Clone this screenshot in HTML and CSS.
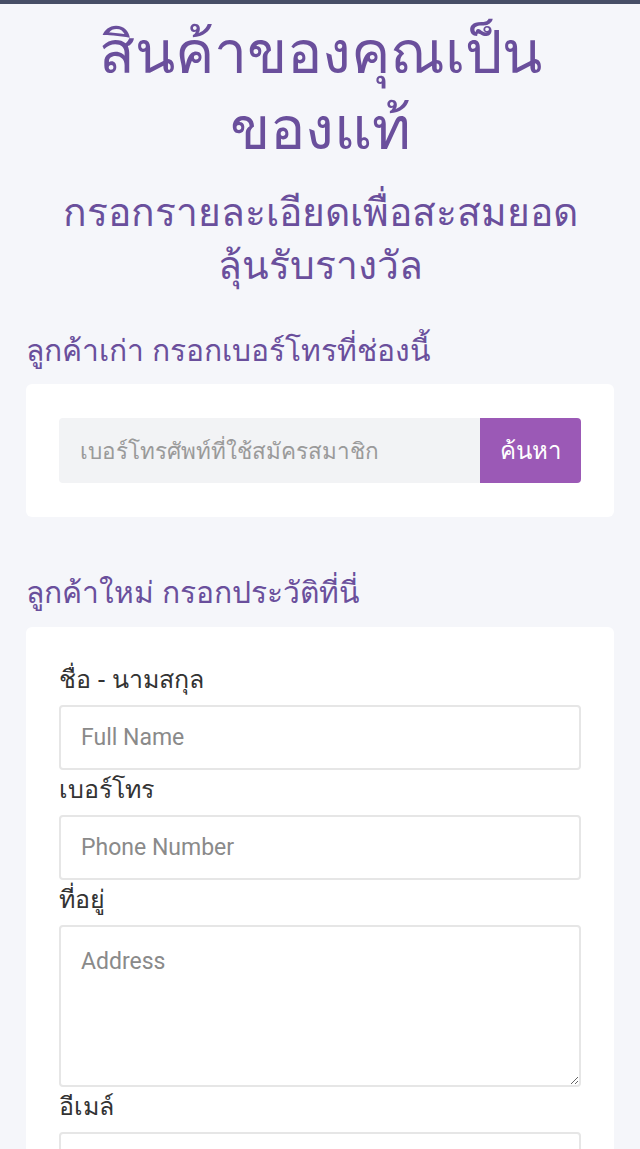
FILE: index.html
```html
<!DOCTYPE html>
<html lang="th">
<head>
    <meta charset="UTF-8">
    <meta name="viewport" content="width=device-width, initial-scale=1.0">
    <title>ลงทะเบียนสินค้า</title>
    <link rel="stylesheet" href="styles.css">
</head>
<body>
    <div class="topbar"></div>
    <div class="page">
        <h1 class="title">สินค้าของคุณเป็น<br>ของแท้</h1>
        <h2 class="subtitle">กรอกรายละเอียดเพื่อสะสมยอด<br>ลุ้นรับรางวัล</h2>

        <h3 class="section-title">ลูกค้าเก่า กรอกเบอร์โทรที่ช่องนี้</h3>
        <div class="card card-search">
            <div class="search-group">
                <input type="text" class="search-input" placeholder="เบอร์โทรศัพท์ที่ใช้สมัครสมาชิก">
                <button type="button" class="search-button">ค้นหา</button>
            </div>
        </div>

        <h3 class="section-title">ลูกค้าใหม่ กรอกประวัติที่นี่</h3>
        <form class="card card-form">
            <label for="fullname">ชื่อ - นามสกุล</label>
            <input type="text" id="fullname" class="field" placeholder="Full Name">
            <label for="phone">เบอร์โทร</label>
            <input type="tel" id="phone" class="field" placeholder="Phone Number">
            <label for="address">ที่อยู่</label>
            <textarea id="address" class="field field-area" placeholder="Address"></textarea>
            <label for="email">อีเมล์</label>
            <input type="email" id="email" class="field" placeholder="Email">
        </form>
    </div>
</body>
</html>
```

FILE: styles.css
```css
body { margin: 0; background-color: #f5f6fa; font-family: "Noto Sans", "DejaVu Sans", sans-serif; color: #333; }
.topbar { height: 4px; background-color: #474e66; }
.page { padding: 0 26px; }
.title { margin: 8px 0 0; text-align: center; color: #6a4f9c; font-size: 59px; font-weight: 500; line-height: 76px; }
.subtitle { margin: 20px 0 0; text-align: center; color: #6a4f9c; font-size: 39px; font-weight: 500; line-height: 53px; }
.section-title { margin: 40px 0 0; color: #6a4f9c; font-size: 30px; font-weight: 500; line-height: 40px; }
.card { background-color: #fff; border-radius: 6px; margin-top: 14px; padding: 34px 33px; }
.card-search { margin-bottom: 55px; }
.form-card, .card-form { margin-top: 15px; }
.search-group { display: flex; height: 65px; }
.search-input { flex: 1; min-width: 0; border: none; background-color: #f2f3f5; padding: 0 21px; font-size: 22.5px; color: #333; border-radius: 4px 0 0 4px; font-family: "Noto Sans", sans-serif; }
.search-input::placeholder { color: #9a9a9a; }
.search-button { width: 101px; border: none; background-color: #9b59b6; color: #fff; font-size: 24px; border-radius: 0 4px 4px 0; font-family: "Noto Sans", sans-serif; }
.card-form { display: flex; flex-direction: column; padding-top: 33px; }
.card-form label { font-size: 25px; line-height: 36px; color: #333; margin-bottom: 9px; }
.field { height: 65px; box-sizing: border-box; border: 2px solid #e6e6e6; border-radius: 4px; padding: 0 20px; font-size: 23px; font-family: Roboto, sans-serif; color: #333; }
.field::placeholder { color: #8a8a8a; }
.field-area { height: 162px; padding-top: 21px; resize: vertical; }
```
